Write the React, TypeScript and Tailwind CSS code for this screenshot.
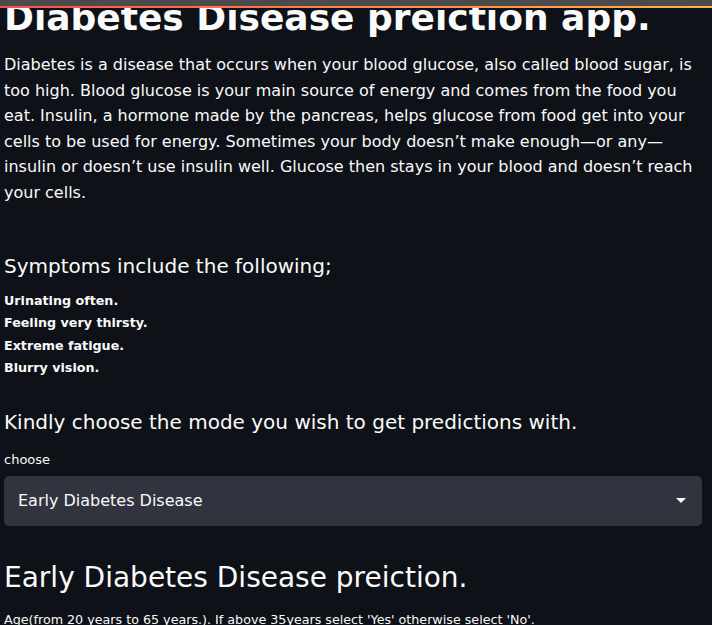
import React from "react";

export default function App() {
  const font = { fontFamily: '"DejaVu Sans", sans-serif' };
  return (
    <div className="relative w-[712px] h-[625px] overflow-hidden bg-[#0e1117] text-[#fafafa]" style={font}>
      <div className="absolute top-0 left-0 right-0 z-10">
        <div className="h-[6px] bg-[#4b4b4b]" />
        <div className="h-[2px] bg-gradient-to-r from-[#ff4b4b] to-[#ffb04f]" />
      </div>
      <div className="pl-[4px] pr-[10px]">
        <h1 className="text-[36px] font-bold leading-[40px] -mt-[2px] whitespace-nowrap">Diabetes Disease preiction app.</h1>
        <p className="mt-[14px] text-[16px] leading-[25.6px]">
          Diabetes is a disease that occurs when your blood glucose, also called blood sugar, is too high. Blood glucose is your main source of energy and comes from the food you eat. Insulin, a hormone made by the pancreas, helps glucose from food get into your cells to be used for energy. Sometimes your body doesn’t make enough—or any—insulin or doesn’t use insulin well. Glucose then stays in your blood and doesn’t reach your cells.
        </p>
        <h3 className="mt-[45px] text-[20px] leading-[30px]">Symptoms include the following;</h3>
        <div className="mt-[9px] text-[12.7px] font-bold leading-[22.6px]">
          <div>Urinating often.</div>
          <div>Feeling very thirsty.</div>
          <div>Extreme fatigue.</div>
          <div>Blurry vision.</div>
        </div>
        <h3 className="mt-[27px] text-[20px] leading-[30px]">Kindly choose the mode you wish to get predictions with.</h3>
        <div className="mt-[15px] text-[13px] leading-[16px]">choose</div>
        <div className="mt-[8px] w-[698px] h-[50px] rounded-[5px] bg-[#31333f] flex items-center justify-between pl-[14px] pr-[16px]">
          <span className="text-[16px]">Early Diabetes Disease</span>
          <svg width="10" height="6" viewBox="0 0 10 6"><path d="M0 0 L10 0 L5 5 Z" fill="#fafafa" /></svg>
        </div>
        <h2 className="mt-[32px] text-[28px] leading-[40px]">Early Diabetes Disease preiction.</h2>
        <div className="mt-[14px] text-[12.7px] leading-[16px] whitespace-nowrap">Age(from 20 years to 65 years.). If above 35years select 'Yes' otherwise select 'No'.</div>
      </div>
    </div>
  );
}
